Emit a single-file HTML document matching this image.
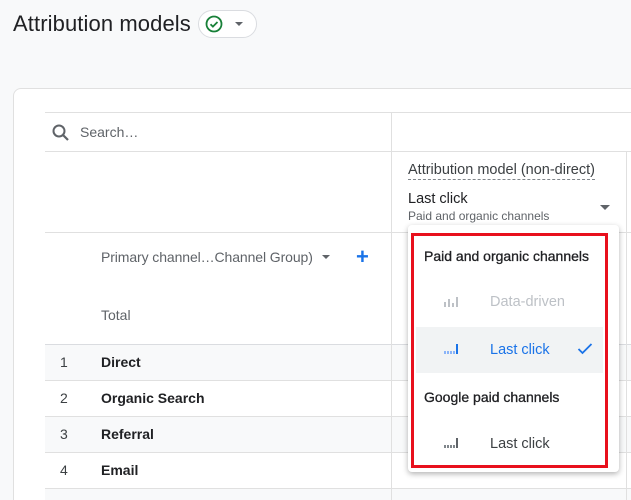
<!DOCTYPE html>
<html><head><style>
*{box-sizing:border-box;margin:0;padding:0}
html,body{width:631px;height:500px;overflow:hidden}
body{background:#f8f9fa;font-family:"Liberation Sans",Arial,sans-serif;position:relative;color:#202124}
.abs{position:absolute}
.h{position:absolute;height:1px;background:#e0e0e0}
.t{position:absolute;white-space:nowrap}
</style></head><body>
<div class="t" style="left:13px;top:11px;font-size:22px;letter-spacing:0.1px;color:#202124">Attribution models</div>
<div class="abs" style="left:198px;top:10px;width:59px;height:28px;border:1px solid #dadce0;border-radius:14px;background:#fff"></div>
<svg class="abs" style="left:204px;top:14px" width="20" height="20" viewBox="0 0 20 20"><circle cx="10" cy="10" r="7.5" fill="none" stroke="#188038" stroke-width="1.8"/><path d="M6.5 10.2l2.4 2.4 4.6-4.6" fill="none" stroke="#188038" stroke-width="1.8"/></svg>
<div class="abs" style="left:235px;top:22px;border-left:4px solid transparent;border-right:4px solid transparent;border-top:4px solid #5f6368"></div>

<div class="abs" style="left:13px;top:88px;width:640px;height:420px;background:#fff;border:1px solid #e0e0e0;border-radius:8px"></div>
<div class="h" style="left:45px;top:112px;width:586px"></div>
<div class="h" style="left:45px;top:151px;width:586px"></div>
<div class="h" style="left:45px;top:232px;width:586px"></div>
<div class="abs" style="left:45px;top:344px;width:586px;height:36px;background:#f8f9fa;border-top:1px solid #dadce0"></div>
<div class="h" style="left:45px;top:380px;width:586px"></div>
<div class="abs" style="left:45px;top:416px;width:586px;height:36px;background:#f8f9fa;border-top:1px solid #e0e0e0"></div>
<div class="h" style="left:45px;top:452px;width:586px"></div>
<div class="abs" style="left:45px;top:488px;width:586px;height:12px;background:#f8f9fa;border-top:1px solid #e0e0e0"></div>
<div class="abs" style="left:391px;top:112px;width:1px;height:388px;background:#e0e0e0"></div>
<div class="abs" style="left:626px;top:151px;width:1px;height:349px;background:#e0e0e0"></div>

<svg class="abs" style="left:51px;top:123px" width="20" height="20" viewBox="0 0 20 20"><circle cx="8" cy="8" r="5.5" fill="none" stroke="#5f6368" stroke-width="2"/><path d="M12 12l5 5" stroke="#5f6368" stroke-width="2.2"/></svg>
<div class="t" style="left:80px;top:124px;font-size:14px;color:#5f6368">Search…</div>

<div class="t" style="left:408px;top:162px;font-size:14.5px;color:#3c4043;border-bottom:1px dashed #80868b;padding-bottom:1px">Attribution model (non-direct)</div>
<div class="t" style="left:408px;top:191px;font-size:14.5px;color:#202124">Last click</div>
<div class="t" style="left:408px;top:209px;font-size:12px;color:#5f6368">Paid and organic channels</div>
<div class="abs" style="left:600px;top:205px;border-left:5px solid transparent;border-right:5px solid transparent;border-top:5px solid #5f6368"></div>

<div class="t" style="left:101px;top:249px;font-size:14px;color:#5f6368;letter-spacing:-0.1px">Primary channel…Channel Group)</div>
<div class="abs" style="left:322px;top:255px;border-left:4px solid transparent;border-right:4px solid transparent;border-top:4px solid #5f6368"></div>
<div class="t" style="left:356px;top:244px;font-size:22px;color:#1a73e8;font-weight:bold">+</div>
<div class="t" style="left:101px;top:307px;font-size:14px;color:#5f6368">Total</div>

<div class="t" style="left:60px;top:354px;font-size:14px;color:#3c4043">1</div>
<div class="t" style="left:101px;top:354px;font-size:14px;font-weight:bold">Direct</div>
<div class="t" style="left:60px;top:390px;font-size:14px;color:#3c4043">2</div>
<div class="t" style="left:101px;top:390px;font-size:14px;font-weight:bold">Organic Search</div>
<div class="t" style="left:60px;top:426px;font-size:14px;color:#3c4043">3</div>
<div class="t" style="left:101px;top:426px;font-size:14px;font-weight:bold">Referral</div>
<div class="t" style="left:60px;top:462px;font-size:14px;color:#3c4043">4</div>
<div class="t" style="left:101px;top:462px;font-size:14px;font-weight:bold">Email</div>

<div class="abs" style="left:408px;top:225px;width:211px;height:247px;background:#fff;border-radius:4px;box-shadow:0 2px 6px rgba(0,0,0,.3)"></div>
<div class="abs" style="left:416px;top:327px;width:187px;height:46px;background:#f1f3f4"></div>
<div class="abs" style="left:411px;top:233px;width:197px;height:235px;border:3px solid #e8101d"></div>
<div class="t" style="left:424px;top:248px;font-size:14px;color:#202124;-webkit-text-stroke:0.3px #202124">Paid and organic channels</div>
<svg class="abs" style="left:444px;top:296px" width="16" height="12"><g fill="#bdc1c6"><rect x="0" y="6" width="2" height="5"/><rect x="4" y="3" width="2" height="8"/><rect x="8" y="7" width="2" height="4"/><rect x="12" y="1" width="2" height="10"/></g></svg>
<div class="t" style="left:490px;top:294px;font-size:14.5px;color:#bdc1c6">Data-driven</div>
<svg class="abs" style="left:444px;top:343px" width="16" height="12"><g fill="#8ab4f8"><rect x="0" y="8" width="2" height="3"/><rect x="3" y="8" width="2" height="3"/><rect x="6" y="8" width="2" height="3"/><rect x="9" y="8" width="2" height="3"/><rect x="12" y="1" width="2" height="10" fill="#1a73e8"/></g></svg>
<div class="t" style="left:490px;top:342px;font-size:14.5px;color:#1a73e8">Last click</div>
<svg class="abs" style="left:577px;top:342px" width="16" height="14"><path d="M1.5 7l4 4 9-9" fill="none" stroke="#1a73e8" stroke-width="1.8"/></svg>
<div class="t" style="left:424px;top:389px;font-size:14px;color:#202124;-webkit-text-stroke:0.3px #202124">Google paid channels</div>
<svg class="abs" style="left:444px;top:437px" width="16" height="12"><g fill="#80868b"><rect x="0" y="8" width="2" height="3"/><rect x="3" y="8" width="2" height="3"/><rect x="6" y="8" width="2" height="3"/><rect x="9" y="8" width="2" height="3"/><rect x="12" y="1" width="2" height="10" fill="#5f6368"/></g></svg>
<div class="t" style="left:490px;top:436px;font-size:14.5px;color:#3c4043">Last click</div>
</body></html>
